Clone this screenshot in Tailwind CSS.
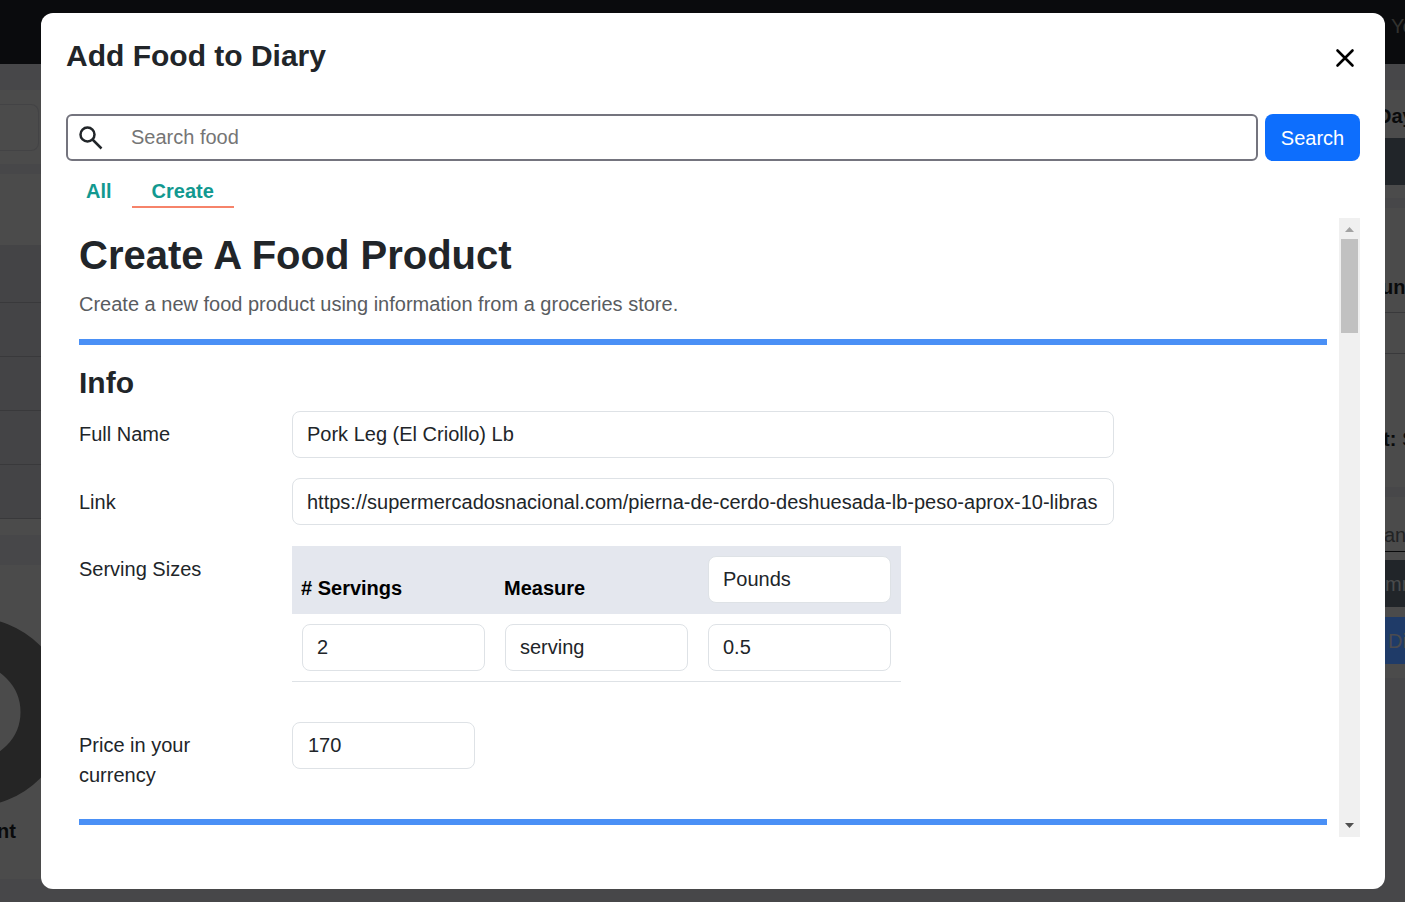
<!DOCTYPE html>
<html lang="en">
<head>
<meta charset="utf-8">
<meta name="viewport" content="width=device-width, initial-scale=1">
<title>Add Food to Diary</title>
<script src="https://cdn.jsdelivr.net/npm/@tailwindcss/browser@4"></script>
</head>
<body class="h-screen overflow-hidden bg-[#474749] font-['Liberation_Sans',Arial,sans-serif] text-xl leading-[30px] text-[#212529]">

<!-- Dimmed diary page behind the dialog -->
<div aria-hidden="true">
  <header class="flex h-16 justify-end overflow-hidden bg-[#0a0b0d] pt-[11px] text-[#32322f]"><span class="w-[14px] whitespace-nowrap">You</span></header>
  <main class="flex justify-between pt-[26px]">
    <div class="w-[60px] overflow-hidden">
      <section class="h-[74px] bg-[#4b4b4b] pt-[14px]"><div class="h-[47px] w-[39px] rounded-r-lg border border-l-0 border-[#434345]"></div></section>
      <section class="mt-[10px] bg-[#4b4b4b] pt-[71px] pb-4">
        <div class="h-[58px] border-b border-[#39393b] bg-[#444446]"></div>
        <div class="h-[54px] border-b border-[#39393b] bg-[#444446]"></div>
        <div class="h-[54px] border-b border-[#39393b] bg-[#444446]"></div>
        <div class="h-[54px] border-b border-[#39393b] bg-[#444446]"></div>
        <div class="h-[54px] border-b border-[#39393b] bg-[#444446]"></div>
      </section>
      <section class="mt-[30px] h-[314px] bg-[#4b4b4b] pt-[52px]">
        <svg class="h-[190px] w-[60px]" viewBox="0 0 60 190"><circle cx="-27" cy="95" r="71" fill="none" stroke="#252525" stroke-width="47"/></svg>
        <p class="mt-[9px] w-4 font-bold text-[#090a0b]"><span class="flex justify-end">nt</span></p>
      </section>
    </div>
    <div class="w-10 overflow-hidden whitespace-nowrap">
      <section class="h-[108px] bg-[#4b4b4b] pt-[11px]">
        <p class="pl-3 font-bold text-[#090a0b]">Day</p>
        <div class="mt-[7px] h-[47px] bg-[#212529]"></div>
      </section>
      <section class="mt-[10px] h-[279px] bg-[#4b4b4b] pt-16">
        <p class="h-[41px] border-b border-[#39393b] pl-4 font-bold text-[#090a0b]">unt</p>
        <div class="h-[41px] border-b border-[#39393b]"></div>
        <p class="mt-[70px] pl-[18px] font-bold text-[#090a0b]">t: <span class="font-normal">S</span></p>
      </section>
      <section class="mt-[10px] h-[181px] bg-[#4b4b4b] pt-[23px]">
        <p class="h-8 border-b border-[#090a0b] pl-[19px] text-[#222324]">and</p>
        <div class="mt-2 h-[47px] bg-[#212529] pt-[9px] pl-[20px] text-[#4a4b4c]">mm</div>
        <div class="mt-[10px] h-[47px] bg-[#1f3b68] pt-[9px] pl-[23px] text-[#4b4b4f]">Dia</div>
      </section>
    </div>
  </main>
</div>

<!-- Dialog -->
<div class="fixed inset-0 flex pt-[13px] pr-5 pb-[13px] pl-[41px]">
  <section role="dialog" aria-modal="true" aria-labelledby="dialog-title" class="flex min-w-0 flex-1 flex-col rounded-xl bg-white px-[25px] pb-[52px]">
    <header class="flex h-[61px] justify-between pt-[25px]">
      <h1 id="dialog-title" class="text-3xl leading-9 font-bold">Add Food to Diary</h1>
      <button type="button" aria-label="Close" class="mt-[5px] flex size-[30px] items-center justify-center text-black">
        <svg class="size-5" viewBox="0 0 20 20" fill="none" stroke="currentColor" stroke-width="2.6" stroke-linecap="round"><path d="M2.500 2.500l15 15M17.500 2.500l-15 15"/></svg>
      </button>
    </header>
    <form class="mt-10 flex gap-[7px]">
      <div class="flex h-[47px] min-w-0 flex-1 items-center rounded-md border-2 border-[#74747e] pl-[11px]">
        <svg class="size-6 shrink-0 text-[#212529]" viewBox="0 0 24 24" fill="none" stroke="currentColor" stroke-width="2.5"><circle cx="8.500" cy="8.500" r="7"/><path d="M13.500 13.500l9 9"/></svg>
        <input type="text" aria-label="Search food" placeholder="Search food" class="ml-[28px] h-full min-w-0 flex-1 outline-none placeholder:text-[#757575]">
      </div>
      <button type="submit" class="h-[47px] w-[95px] rounded-lg bg-[#0d6efd] text-white">Search</button>
    </form>
    <nav class="flex h-[47px] text-[#129990]">
      <a href="#all" class="px-5 pt-[15px] font-bold">All</a>
      <a href="#create" class="h-[47px] border-b-2 border-[#f6836a] px-5 pt-[15px] font-bold">Create</a>
    </nav>
    <div class="mt-[10px] flex min-h-0 flex-1 overflow-hidden">
      <div class="min-w-0 flex-1 pt-[13px] pr-3 pl-[13px]">
        <h2 class="text-[40px] leading-[48px] font-bold">Create A Food Product</h2>
        <p class="mt-[10px] text-[#595c5f]">Create a new food product using information from a groceries store.</p>
        <hr class="mt-5 h-[6px] border-0 bg-[#4a90f6]">
        <h3 class="mt-5 text-3xl leading-9 font-bold">Info</h3>
        <div class="mt-[10px] grid grid-cols-[213px_minmax(0,822px)] gap-y-5">
          <label for="name" class="pt-2">Full Name</label>
          <input id="name" type="text" value="Pork Leg (El Criollo) Lb" class="h-[47px] rounded-lg border border-[#dee2e6] px-[14px]">
          <label for="link" class="pt-[9px]">Link</label>
          <input id="link" type="text" value="https://supermercadosnacional.com/pierna-de-cerdo-deshuesada-lb-peso-aprox-10-libras" class="h-[47px] rounded-lg border border-[#dee2e6] px-[14px] pt-px">
          <p id="sizes" class="pt-[9px]">Serving Sizes</p>
          <table aria-labelledby="sizes" class="mt-px w-[609px] table-fixed border-separate border-spacing-0">
            <thead>
              <tr class="h-[68px] bg-[#e4e7ee] text-left text-black">
                <th class="px-[9px] pb-[11px] align-bottom">#&nbsp;Servings</th>
                <th class="px-[9px] pb-[11px] align-bottom">Measure</th>
                <th class="p-[10px] align-top font-normal"><select aria-label="Unit" class="block h-[47px] w-full appearance-none rounded-lg border border-[#dee2e6] bg-white px-[14px] pb-[2px] text-[#212529]"><option>Pounds</option></select></th>
              </tr>
            </thead>
            <tbody>
              <tr>
                <td class="border-b border-[#dee2e6] p-[10px]"><input type="text" aria-label="Servings" value="2" class="block h-[47px] w-full rounded-lg border border-[#dee2e6] px-[14px]"></td>
                <td class="border-b border-[#dee2e6] p-[10px]"><input type="text" aria-label="Measure" value="serving" class="block h-[47px] w-full rounded-lg border border-[#dee2e6] px-[14px]"></td>
                <td class="border-b border-[#dee2e6] p-[10px]"><input type="text" aria-label="Pounds" value="0.5" class="block h-[47px] w-full rounded-lg border border-[#dee2e6] px-[14px]"></td>
              </tr>
            </tbody>
          </table>
          <label for="price" class="mt-5 pt-2 pr-20">Price in your currency</label>
          <input id="price" type="text" value="170" class="mt-5 h-[47px] w-[183px] rounded-lg border border-[#dee2e6] px-[15px]">
        </div>
        <hr class="mt-[29px] h-[6px] border-0 bg-[#4a90f6]">
      </div>
      <!-- Scroll bar -->
      <div aria-hidden="true" class="flex w-[21px] flex-col items-center bg-[#f0f0f0]">
        <svg class="h-[21px] w-[21px] shrink-0" viewBox="0 0 21 21"><path d="M6 14l4.500-5 4.500 5z" fill="#a3a3a3"/></svg>
        <div class="h-[94px] w-[17px] shrink-0 bg-[#c1c1c1]"></div>
        <svg class="mt-auto h-[21px] w-[21px] shrink-0" viewBox="0 0 21 21"><path d="M6 7l4.500 5 4.500-5z" fill="#505050"/></svg>
      </div>
    </div>
  </section>
</div>
</body>
</html>
